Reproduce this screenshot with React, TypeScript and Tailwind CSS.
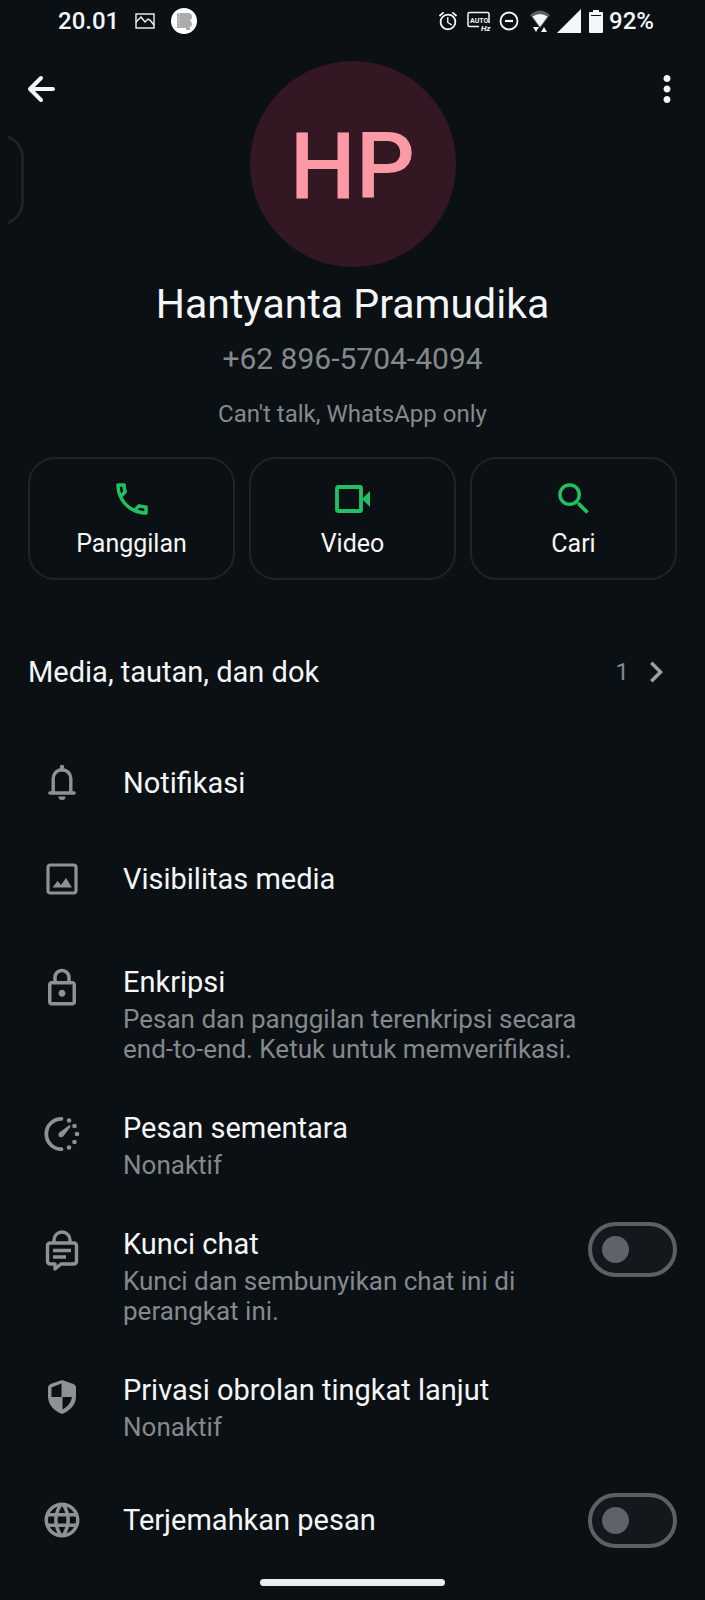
import { useState } from "react";
import type { ReactNode } from "react";
import {
    MdOutlineCall,
    MdSearch,
    MdOutlineLock,
    MdMoreVert,
    MdChevronRight,
    MdLanguage,
    MdAccessAlarm,
} from "react-icons/md";

type ActionProps = {
    label: string
    children: ReactNode
}

type RowProps = {
    icon: ReactNode
    title: string
    text?: string
}

type ToggleRowProps = RowProps & {
    id: string
}

function StatusBar() {
    return (
        <div className="flex h-[42px] items-center justify-between pl-[58px] pr-[51px] text-2xl font-medium">
            <div className="flex items-center">
                <span>20.01</span>
                <svg className="ml-4 h-4 w-5" viewBox="0 0 20 16" fill="none" stroke="currentColor" strokeWidth="1.4">
                    <rect x="1" y="1" width="18" height="14" />
                    <path d="M1 9l5-5 4 5 3-3 2 1 4 5" />
                </svg>
                <svg className="ml-4 size-[26px]" viewBox="0 0 26 26">
                    <circle cx="13" cy="13" r="13" fill="#ffffff" />
                    <path d="M6 5h11q4 0 4 4 0 2-2 3.5 2 1.5 2 4-.5 3-4 3.500H6z" fill="#a9abad" />
                    <path d="M8 5v14" stroke="#e6e6e6" strokeWidth="1" strokeDasharray="1.5 1.5" />
                    <path d="M15 21h4" stroke="#55585a" strokeWidth="1" />
                </svg>
            </div>
            <div className="flex items-center">
                <MdAccessAlarm className="size-[22px]" />
                <svg className="ml-2 h-5 w-6" viewBox="0 0 24 20" fill="none" stroke="currentColor" strokeWidth="1.5">
                    <path d="M12 15.5H2.5q-1.5 0-1.5-1.5V3q0-1.5 1.5-1.5h18q1.5 0 1.5 1.5v9" />
                    <text x="3" y="11.500" fontSize="7" fontWeight="700" fontFamily="Roboto, sans-serif" fill="currentColor" stroke="none">AUTO</text>
                    <text x="14" y="19.500" fontSize="8" fontWeight="700" fontStyle="italic" fontFamily="Roboto, sans-serif" fill="currentColor" stroke="none">Hz</text>
                </svg>
                <svg className="ml-2 size-5" viewBox="0 0 20 20" fill="none" stroke="currentColor" strokeWidth="1.8">
                    <circle cx="10" cy="10" r="8.5" />
                    <path d="M6 10h8" strokeWidth="2.2" />
                </svg>
                <svg className="ml-2.5 h-6 w-[22px]" viewBox="0 0 22 24" fill="currentColor">
                    <path d="M1 6Q11-3 21 6L11 19z" fill="#5a5e60" />
                    <path d="M3.5 7.500Q11 2.500 18.500 7.500L11 18z" />
                    <path d="M4 18h6l-3 5zM12 23l3-5 3 5z" />
                </svg>
                <svg className="ml-1.5 size-6" viewBox="0 0 24 24" fill="currentColor">
                    <path d="M0 24L24 0v24z" />
                </svg>
                <svg className="ml-2 h-[23px] w-[14px]" viewBox="0 0 14 23" fill="currentColor">
                    <path d="M4 0h6v2H4zM1 2h12q1 0 1 1v19q0 1-1 1H1q-1 0-1-1V3q0-1 1-1z" />
                    <path d="M2 5.500h10" stroke="#0b1014" strokeWidth="1" />
                </svg>
                <span className="ml-1.5">92%</span>
            </div>
        </div>
    )
}

function Action({ label, children }: ActionProps) {
    return (
        <button
            type="button"
            className="flex h-[123px] flex-1 flex-col items-center justify-center gap-2 rounded-[27px] border-2 border-[#1f2428] text-[25px] leading-8"
        >
            {children}
            <span>{label}</span>
        </button>
    )
}

function RowText({ title, text }: { title: string, text?: string }) {
    return (
        <span className="flex flex-1 flex-col gap-1">
            <span className="text-[29px] leading-9">{title}</span>
            {text && <span className="max-w-[460px] text-[26px] leading-[30px] text-[#84898c]">{text}</span>}
        </span>
    )
}

function Row({ icon, title, text }: RowProps) {
    return (
        <button type="button" className={`flex w-full gap-10 pl-[41px] pr-7 text-left ${text ? "items-start py-[23px]" : "items-center py-6"}`}>
            <span className="py-[3px] leading-none text-[#8d9294]">{icon}</span>
            <RowText title={title} text={text} />
        </button>
    )
}

function ToggleRow({ id, icon, title, text }: ToggleRowProps) {
    const [checked, setChecked] = useState(false)

    return (
        <label htmlFor={id} className={`flex min-h-[110px] gap-10 pl-[41px] pr-7 ${text ? "items-start py-[23px]" : "items-center"}`}>
            <span className="py-[3px] text-[#8d9294]">{icon}</span>
            <RowText title={title} text={text} />
            <input
                id={id}
                type="checkbox"
                role="switch"
                checked={checked}
                onChange={(e) => setChecked(e.target.checked)}
                className={`h-[55px] w-[89px] shrink-0 appearance-none rounded-full border-4 border-[#5b6063] bg-[#12181c] p-[10px] before:block before:size-[27px] before:rounded-full before:bg-[#5e636b] checked:bg-[#21c063] checked:before:ml-auto ${text ? "-mt-1" : ""}`}
            />
        </label>
    )
}

function BellIcon() {
    return (
        <svg className="size-[42px]" viewBox="0 0 42 42" fill="none" stroke="currentColor" strokeWidth="3.4" strokeLinecap="round">
            <path d="M12.200 30V16.500a8.800 8.800 0 0 1 17.600 0V30" />
            <path d="M21 5v2.500" strokeWidth="4.400" />
            <path d="M9 31h24" strokeWidth="3.600" />
            <path d="M17.500 34.500h7a3.500 3.500 0 0 1-7 0z" fill="currentColor" stroke="none" />
        </svg>
    )
}

function ImageIcon() {
    return (
        <svg className="size-[42px]" viewBox="0 0 42 42" fill="none" stroke="currentColor" strokeWidth="3.2">
            <rect x="7" y="7" width="28" height="28" rx="2.5" />
            <path d="M11.5 29.500l5-6.500 3.500 4 5-7 6 9.500z" fill="currentColor" stroke="none" />
        </svg>
    )
}

function TimerIcon() {
    return (
        <svg className="size-[42px]" viewBox="0 0 42 42" fill="none" stroke="currentColor" strokeWidth="3.8" strokeLinecap="round">
            <path d="M20.500 5.800a15.200 15.200 0 0 0 0 30.400" />
            <path d="M18.300 19.500l9.500-7q2.200-.8 1.600 1.400l-7 9.400q-1.800 1.900-4 .4-1.900-2-.1-4.200z" fill="currentColor" stroke="none" />
            <g fill="currentColor" stroke="none">
                <circle cx="28" cy="7.500" r="2.300" />
                <circle cx="33.500" cy="13" r="2.300" />
                <circle cx="36" cy="21" r="2.300" />
                <circle cx="33.500" cy="29" r="2.300" />
                <circle cx="28" cy="34.500" r="2.300" />
            </g>
        </svg>
    )
}

function ChatLockIcon() {
    return (
        <svg className="size-[42px]" viewBox="0 0 42 42" fill="none" stroke="currentColor" strokeWidth="3.4" strokeLinejoin="round">
            <path d="M13 14v-3a8 8 0 0 1 16 0v3" />
            <path d="M9.500 14h23q3 0 3 3v15q0 3-3 3H20l-6 5v-5H9.500q-3 0-3-3V17q0-3 3-3z" />
            <path d="M12 21.500h18M12 28h13" />
        </svg>
    )
}

function ShieldIcon() {
    return (
        <svg className="size-[42px]" viewBox="0 0 42 42" fill="currentColor">
            <path fillRule="evenodd" d="M21 5l11.500 4q2.500 1 2.500 3.500V21q0 12-14 18Q7 33 7 21v-8.500Q7 10 9.500 9zM20.500 8.500l-10 4V22h10zM21.500 22v12.500q8-4 9.500-12.500z" />
        </svg>
    )
}

export default function App() {
    return (
        <main className="min-h-screen bg-[#0b1014] font-['Roboto',sans-serif] text-[#f4f6f7]">
            <StatusBar />

            <header className="relative flex items-start justify-between px-[17px] pt-[19px]">
                <button type="button" aria-label="Kembali" className="py-[7px]">
                    <svg className="size-[42px]" viewBox="0 0 42 42" fill="none" stroke="currentColor" strokeWidth="4" strokeLinecap="round" strokeLinejoin="round">
                        <path d="M36 21H13M24 10L13 21l11 11" />
                    </svg>
                </button>
                <div className="flex size-[206px] items-center justify-center rounded-full bg-[#331722] pt-1 text-[93px] leading-none font-medium text-[#fb9aa4]">
                    HP
                </div>
                <button type="button" aria-label="Opsi lainnya" className="py-[7px]">
                    <MdMoreVert className="size-[42px]" />
                </button>
                {/* edge panel handle */}
                <svg className="absolute left-2 top-[93px] h-[90px] w-4" viewBox="0 0 16 90" fill="none" stroke="#1f2529" strokeWidth="2.5">
                    <path d="M0 2q14 6 14.500 20v46q-.5 13-14.500 20" />
                </svg>
            </header>

            <section className="flex flex-col items-center pt-3 text-center">
                <h1 className="text-[41px] leading-[50px]">Hantyanta Pramudika</h1>
                <p className="pt-3 text-[30px] leading-9 text-[#84898c]">+62 896-5704-4094</p>
                <p className="pt-[22px] text-2xl leading-[30px] text-[#84898c]">Can't talk, WhatsApp only</p>
            </section>

            <div className="flex gap-[14px] px-7 pt-7">
                <Action label="Panggilan">
                    <MdOutlineCall className="size-[42px] text-[#21c063]" />
                </Action>
                <Action label="Video">
                    <svg className="size-[42px] text-[#21c063]" viewBox="0 0 42 42" fill="none" stroke="currentColor" strokeWidth="3.8" strokeLinejoin="round">
                        <rect x="5" y="9" width="24" height="24" rx="1" />
                        <path d="M30 21l8-8v16z" fill="currentColor" stroke="none" />
                    </svg>
                </Action>
                <Action label="Cari">
                    <MdSearch className="size-[42px] text-[#21c063]" />
                </Action>
            </div>

            <button type="button" className="mt-[53px] flex w-full items-center px-7 py-[18px] text-left">
                <span className="flex-1 text-[29px] leading-9">Media, tautan, dan dok</span>
                <span className="text-2xl text-[#84898c]">1</span>
                <MdChevronRight className="ml-1.5 size-[42px] text-[#9a9fa1]" />
            </button>

            <div className="pt-6">
                <Row icon={<BellIcon />} title="Notifikasi" />
                <Row icon={<ImageIcon />} title="Visibilitas media" />
            </div>

            <div className="pt-[14px]">
                <Row
                    icon={<MdOutlineLock className="size-[42px]" />}
                    title="Enkripsi"
                    text="Pesan dan panggilan terenkripsi secara end-to-end. Ketuk untuk memverifikasi."
                />
                <Row icon={<TimerIcon />} title="Pesan sementara" text="Nonaktif" />
                <ToggleRow
                    id="kunci-chat"
                    icon={<ChatLockIcon />}
                    title="Kunci chat"
                    text="Kunci dan sembunyikan chat ini di perangkat ini."
                />
                <Row icon={<ShieldIcon />} title="Privasi obrolan tingkat lanjut" text="Nonaktif" />
                <ToggleRow id="terjemahkan" icon={<MdLanguage className="size-[42px]" />} title="Terjemahkan pesan" />
            </div>

            <div className="mx-auto mt-1 h-[7px] w-[185px] rounded-full bg-[#ececec]" />
        </main>
    );
}
